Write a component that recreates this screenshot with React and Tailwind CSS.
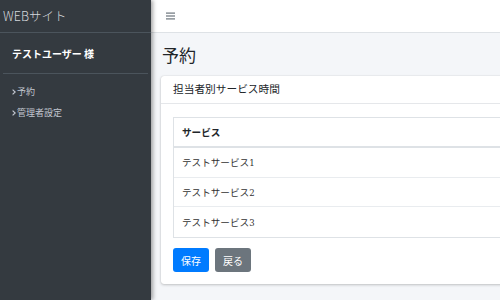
import React from 'react';

const services = ['テストサービス1', 'テストサービス2', 'テストサービス3'];

function Label({ text }) {
  // digits render in a different, smaller face in the reference
  const m = text.match(/^(.*?)(\d+)$/);
  if (!m) return <span>{text}</span>;
  return (
    <span>
      {m[1]}
      <span style={{ fontFamily: '"DejaVu Serif", serif' }} className="text-[8.5px]">
        {m[2]}
      </span>
    </span>
  );
}

function Chevron() {
  return (
    <svg width="4" height="6" viewBox="0 0 4 6" className="mr-[1px] mt-[1px]">
      <path d="M0.6 0.6 L3.2 3 L0.6 5.4" fill="none" stroke="currentColor" strokeWidth="1.2" />
    </svg>
  );
}

export default function App() {
  return (
    <div
      className="flex w-[500px] h-[300px] overflow-hidden text-[#212529]"
      style={{ fontFamily: '"Noto Sans CJK JP", "Noto Sans", sans-serif' }}
    >
      {/* Sidebar */}
      <aside className="w-[151px] shrink-0 bg-[#343a40] relative z-10 shadow-[2px_0_4px_rgba(0,0,0,0.35)]">
        <div className="h-[33px] border-b border-[#4b545c] flex items-center pl-[3px] text-[12.5px] font-light text-[#d5d8dc]">
          WEBサイト
        </div>
        <div className="mx-[3px] h-[41px] border-b border-[#4b545c] flex items-center pl-[9px] text-[10px] font-bold text-white">
          テストユーザー 様
        </div>
        <nav className="pt-[7px] pl-[12px] text-[9px] text-[#c2c7d0] flex flex-col">
          {['予約', '管理者設定'].map((t) => (
            <div key={t} className="h-[21px] flex items-center">
              <Chevron />
              <span>{t}</span>
            </div>
          ))}
        </nav>
      </aside>

      {/* Main */}
      <div className="flex-1 flex flex-col min-w-0">
        <header className="h-[33px] shrink-0 bg-white border-b border-[#dee2e6] flex items-center pl-[15px]">
          <svg width="9" height="8" viewBox="0 0 9 8" className="text-[#6c757d]">
            <rect x="0" y="0.5" width="9" height="1.2" fill="currentColor" />
            <rect x="0" y="3.4" width="9" height="1.2" fill="currentColor" />
            <rect x="0" y="6.3" width="9" height="1.2" fill="currentColor" />
          </svg>
        </header>

        <main className="flex-1 bg-[#f4f6f9] pl-[10px]">
          <h1 className="h-[43px] flex items-center pl-[1px] text-[17px] font-normal">予約</h1>

          <div className="w-[400px] bg-white rounded-[3px] shadow-[0_0_1px_rgba(0,0,0,0.2),0_1px_3px_rgba(0,0,0,0.2)]">
            <div className="h-[28px] border-b border-[#e5e7ea] flex items-center pl-[12px] text-[10.7px]">
              担当者別サービス時間
            </div>
            <div className="px-[12px] pt-[13px] pb-[12px]">
              <div className="border border-[#dee2e6] text-[9.6px]">
                <div className="h-[30px] border-b-2 border-[#dee2e6] flex items-center pl-[8px] font-bold">
                  サービス
                </div>
                {services.map((s, i) => (
                  <div
                    key={s}
                    className={`h-[29.7px] flex items-center pl-[8px] text-[#333] ${
                      i < services.length - 1 ? 'border-b border-[#e9ecef]' : ''
                    }`}
                  >
                    <Label text={s} />
                  </div>
                ))}
              </div>
              <div className="flex gap-[6px] mt-[10px]">
                <button className="w-[36px] h-[24px] rounded-[3px] bg-[#007bff] text-white text-[10px] flex items-center justify-center">
                  保存
                </button>
                <button className="w-[36px] h-[24px] rounded-[3px] bg-[#6c757d] text-white text-[10px] flex items-center justify-center">
                  戻る
                </button>
              </div>
            </div>
          </div>
        </main>
      </div>
    </div>
  );
}
